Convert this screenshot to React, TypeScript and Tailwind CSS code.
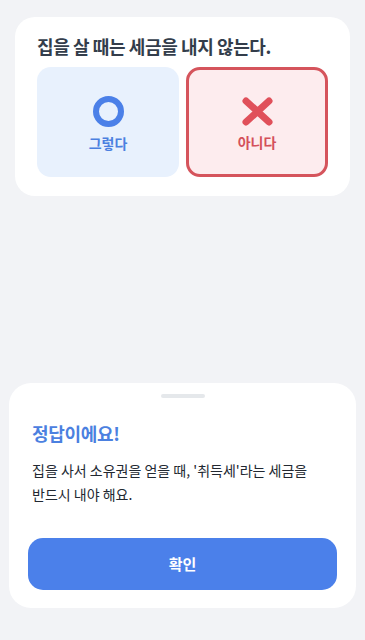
export default function App() {
  return (
    <div
      className="flex h-[640px] flex-col bg-[#f2f3f6]"
      style={{ fontFamily: '"Noto Sans CJK KR", "Noto Sans", sans-serif' }}
    >
      {/* 문제 카드 */}
      <div className="mx-[15px] mt-[17px] rounded-[20px] bg-white px-[22px] pb-[19px] pt-[17px]">
        <h1 className="text-[18px] font-bold leading-[24px] tracking-[-0.4px] text-[#333d4b]">
          집을 살 때는 세금을 내지 않는다.
        </h1>
        <div className="mt-[9px] grid grid-cols-2 gap-[7px]">
          <button className="flex h-[110px] flex-col items-center justify-center gap-[6px] rounded-[14px] bg-[#e8f1fd] pt-1">
            <span className="block h-[31px] w-[31px] rounded-full border-[6px] border-[#4b80e8]" />
            <span className="text-[14px] font-bold leading-[20px] text-[#4b80e0]">그렇다</span>
          </button>
          <button className="flex h-[110px] flex-col items-center justify-center gap-[6px] rounded-[14px] border-[3px] border-[#d5545c] bg-[#fdecee] pt-1">
            <svg width="31" height="29" viewBox="0 0 31 29" className="text-[#e0505a]">
              <path
                d="M4 4 L27 25 M27 4 L4 25"
                stroke="currentColor"
                strokeWidth="7"
                strokeLinecap="round"
                fill="none"
              />
            </svg>
            <span className="text-[14px] font-bold leading-[20px] text-[#d4505a]">아니다</span>
          </button>
        </div>
      </div>

      <div className="flex-1" />

      {/* 결과 시트 */}
      <div className="mx-[9px] mb-[32px] rounded-[22px] bg-white px-[19px] pb-[18px] pt-[11px]">
        <div className="mx-auto h-[4px] w-[44px] rounded-full bg-[#e5e8eb]" />
        <div className="px-[4px]">
          <h2 className="mt-[22px] text-[18px] font-bold leading-[26px] tracking-[-0.3px] text-[#4b80e0]">
            정답이에요!
          </h2>
          <p className="mt-[12px] text-[14px] leading-[24px] text-[#222831]">
            집을 사서 소유권을 얻을 때, '취득세'라는 세금을
            <br />
            반드시 내야 해요.
          </p>
        </div>
        <button className="mt-[32px] flex h-[52px] w-full items-center justify-center rounded-[15px] bg-[#4b80ea] text-[15px] font-semibold text-white">
          확인
        </button>
      </div>
    </div>
  );
}
